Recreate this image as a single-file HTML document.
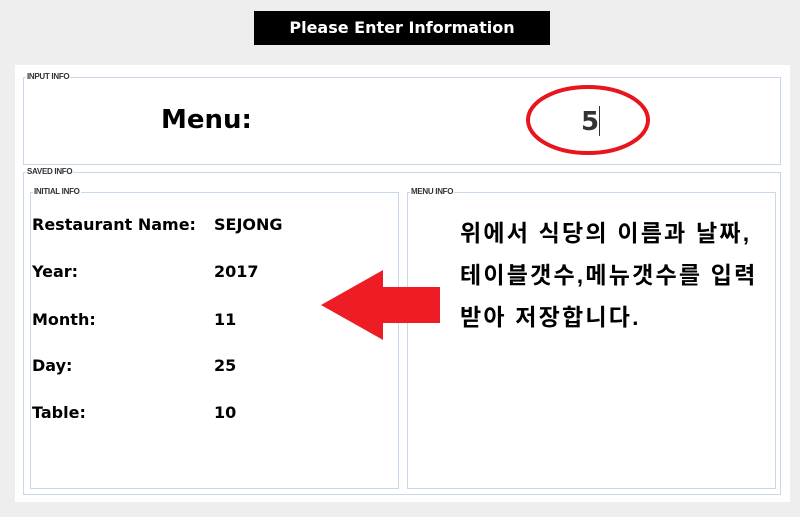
<!DOCTYPE html>
<html><head><meta charset="utf-8"><style>
body{margin:0;width:800px;height:517px;background:#eeeeee;position:relative;overflow:hidden;font-family:"DejaVu Sans","Liberation Sans",sans-serif}
.a{position:absolute}
.box{position:absolute;border:1px solid #c8d8ea}
.lg{position:absolute;font-family:"Liberation Sans",sans-serif;font-size:8px;font-weight:bold;color:#333;background:#fff;padding:0 1px;top:-6px;left:2px;letter-spacing:-0.3px}
.r{position:absolute;font-size:16px;font-weight:bold;color:#000}
</style></head><body>
<div class="a" style="left:254px;top:11px;width:296px;height:34px;background:#000;color:#fff;font-weight:bold;font-size:16px;text-align:center;line-height:34px">Please Enter Information</div>
<div class="a" style="left:15px;top:65px;width:775px;height:437px;background:#fff"></div>
<div class="box" style="left:23px;top:77px;width:756px;height:86px"><span class="lg">INPUT INFO</span></div>
<div class="r" style="left:161px;top:105px;font-size:26px">Menu:</div>
<svg class="a" style="left:520px;top:80px" width="140" height="80"><ellipse cx="68" cy="40" rx="60" ry="33" fill="none" stroke="#e8141e" stroke-width="4"/></svg>
<div class="r" style="left:581px;top:107px;font-size:26px;color:#333">5</div>
<div class="a" style="left:599px;top:106px;width:1px;height:30px;background:#333"></div>
<div class="box" style="left:23px;top:172px;width:756px;height:321px"><span class="lg">SAVED INFO</span></div>
<div class="box" style="left:30px;top:192px;width:367px;height:295px"><span class="lg">INITIAL INFO</span></div>
<div class="box" style="left:407px;top:192px;width:367px;height:295px"><span class="lg">MENU INFO</span></div>
<div class="r" style="left:32px;top:215px">Restaurant Name:</div><div class="r" style="left:214px;top:215px">SEJONG</div>
<div class="r" style="left:32px;top:262px">Year:</div><div class="r" style="left:214px;top:262px">2017</div>
<div class="r" style="left:32px;top:310px">Month:</div><div class="r" style="left:214px;top:310px">11</div>
<div class="r" style="left:32px;top:356px">Day:</div><div class="r" style="left:214px;top:356px">25</div>
<div class="r" style="left:32px;top:403px">Table:</div><div class="r" style="left:214px;top:403px">10</div>
<svg class="a" style="left:0;top:0" width="800" height="517"><polygon points="321,305 383,270 383,287 440,287 440,323 383,323 383,340" fill="#ee1c24"/></svg>
<div class="a" style="left:460px;top:212px;font-family:'Liberation Sans','Noto Sans CJK KR',sans-serif;font-weight:bold;font-size:23px;line-height:42px;color:#000;width:340px;letter-spacing:2.2px;white-space:nowrap">위에서 식당의 이름과 날짜,<br>테이블갯수,메뉴갯수를 입력<br>받아 저장합니다.</div>
</body></html>
